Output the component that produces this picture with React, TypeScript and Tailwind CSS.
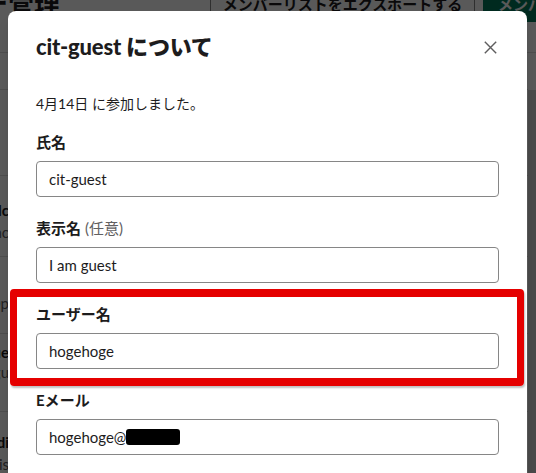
import React from "react";

const font = "font-['Lato','Noto_Sans_CJK_JP',sans-serif]";

function Field({ label, optional, children }: { label: string; optional?: string; children: React.ReactNode }) {
  return (
    <div>
      <div className="mb-2 text-[15px] font-bold leading-[22px] text-[#1d1c1d]">
        {label}
        {optional && <span className="ml-1 font-normal text-[#616061]">{optional}</span>}
      </div>
      {children}
    </div>
  );
}

function TextInput({ value }: { value: string }) {
  return (
    <input
      type="text"
      defaultValue={value}
      readOnly
      className="block h-9 w-full rounded-[4px] border border-[#868686] bg-white px-3 text-[15px] text-[#1d1c1d] outline-none"
    />
  );
}

function Row({ h, pt, lead, bold, sub }: { h: string; pt: string; lead: string; bold?: string; sub?: string }) {
  return (
    <div className={`border-b border-[#dddddd] ${h} ${pt}`}>
      <div className={`flex w-[9px] flex-col items-end whitespace-nowrap text-[15px] ${lead}`}>
        {bold && <span className="font-bold text-[#1d1c1d]">{bold}</span>}
        {sub && <span className="text-[#616061]">{sub}</span>}
      </div>
    </div>
  );
}

export default function App() {
  return (
    <div className={`relative h-[473px] w-[536px] overflow-hidden bg-white ${font}`}>
      {/* page behind the modal, scrolled a little */}
      <div className="-mt-[14px]">
        <header className="flex h-[67px] items-start border-b border-[#dddddd]">
          <div className="flex w-[60px] shrink-0 justify-end whitespace-nowrap text-[26px] font-bold leading-[34px] text-[#1d1c1d]">
            メンバー管理
          </div>
          <div className="ml-[150px] flex h-9 w-[265px] shrink-0 items-center justify-center rounded-[4px] border border-[#868686] text-[15px] font-bold whitespace-nowrap text-[#1d1c1d]">
            メンバーリストをエクスポートする
          </div>
          <div className="ml-2 flex h-9 min-w-0 flex-1 items-center overflow-hidden rounded-l-[4px] bg-[#007a5a] pl-[15px] text-[15px] font-bold whitespace-nowrap text-white">
            メンバーを招待
          </div>
        </header>
        <div className="flex">
          <div className="flex-1">
            <div className="h-[37px] border-b border-[#dddddd]" />
            <Row h="h-[86px]" pt="pt-0" lead="leading-[22px]" />
            <Row h="h-[81px]" pt="pt-[23px]" lead="leading-[22px]" bold="Sally Falc" sub="sync" />
            <Row h="h-[77px]" pt="pt-[35px]" lead="leading-[22px]" sub="DevOp" />
            <Row h="h-[78px]" pt="pt-[8px]" lead="leading-[20px]" bold="cit-gue" sub="cit-gu" />
            <Row h="h-[90px]" pt="pt-[19px]" lead="leading-[22px]" bold="Audi" sub="Dis" />
          </div>
          <div className="mt-[37px] w-[8px] bg-[#d3d3d3]" />
        </div>
      </div>

      {/* overlay + modal */}
      <div className="absolute inset-0 bg-black/65 px-2 pt-[11px]">
        <div className="w-[519px] rounded-[8px] bg-white pb-10 shadow-lg">
          <div className="flex h-[72px] items-center justify-between pl-7 pr-[19px]">
            <h1 className="text-[22px] font-black leading-[28px] tracking-[-0.2px] text-[#1d1c1d]">cit-guest について</h1>
            <button className="flex h-9 w-9 items-center justify-center text-[#5e5d5e]">
              <svg width="13" height="13" viewBox="0 0 13 13" fill="none" stroke="currentColor" strokeWidth="1.4">
                <path d="M0.8 0.8L12.2 12.2M12.2 0.8L0.8 12.2" />
              </svg>
            </button>
          </div>

          <div className="px-7 pt-[11px]">
            <p className="text-[14px] leading-[20px] text-[#1d1c1d]">4月14日 に参加しました。</p>

            <div className="mt-[17px]">
              <Field label="氏名">
                <TextInput value="cit-guest" />
              </Field>
            </div>

            <div className="mt-5">
              <Field label="表示名" optional="(任意)">
                <TextInput value="I am guest" />
              </Field>
            </div>

            <div className="relative mt-5">
              <Field label="ユーザー名">
                <TextInput value="hogehoge" />
              </Field>
              <div className="pointer-events-none absolute -top-[14px] -right-[25px] -bottom-[17px] -left-[26px] rounded-[4px] border-x-[7px] border-y-[8px] border-[#e50000] shadow-[1px_2px_2px_rgba(0,0,0,0.25)]" />
            </div>

            <div className="mt-5">
              <Field label="Eメール">
                <div className="flex h-9 w-full items-center rounded-[4px] border border-[#868686] px-3 text-[15px] text-[#1d1c1d]">
                  hogehoge@
                  <span className="inline-block h-4 w-[54px] rounded-[3px] bg-black" />
                </div>
              </Field>
            </div>
          </div>
        </div>
      </div>
    </div>
  );
}
